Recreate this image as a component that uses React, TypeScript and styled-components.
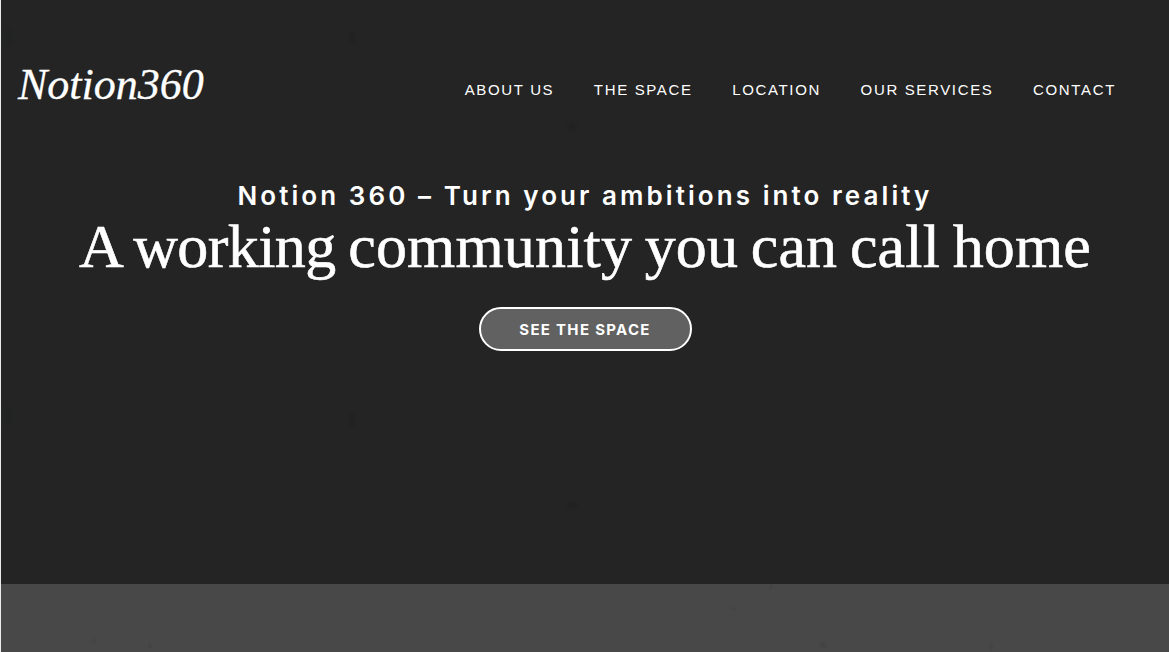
import React from 'react';
import styled, { createGlobalStyle } from 'styled-components';

const links = ['About us', 'The space', 'Location', 'Our services', 'Contact'];

const App = () => (
  <>
    <GlobalStyle />
    <Page>
      <Hero>
        <Header>
          <Logo href="#">Notion360</Logo>
          <Nav>
            {links.map((link) => (
              <NavLink key={link} href="#">
                {link}
              </NavLink>
            ))}
          </Nav>
        </Header>
        <Intro>
          <Tagline>Notion 360 – Turn your ambitions into reality</Tagline>
          <H1>
            A <Tight>working</Tight> community you can call home
          </H1>
          <Button href="#">See the space</Button>
        </Intro>
      </Hero>
      <NextSection />
    </Page>
  </>
);

const GlobalStyle = createGlobalStyle`
  * {
    box-sizing: border-box;
  }

  body {
    margin: 0;
    background: #242424;
    overflow: hidden;
  }
`;

const Page = styled.div`
  display: flex;
  flex-direction: column;
  height: 652px;
  border-left: 1px solid #e9edef;
`;

const Hero = styled.section`
  height: 584px;
  color: #fff;
  background:
    radial-gradient(ellipse 6px 14px at 8px 38px, #202121, transparent),
    radial-gradient(ellipse 5px 11px at 351px 38px, #202020, transparent),
    radial-gradient(ellipse 8px 6px at 571px 127px, #202020, transparent),
    radial-gradient(ellipse 6px 14px at 8px 416px, #202121, transparent),
    radial-gradient(ellipse 5px 11px at 351px 420px, #202020, transparent),
    radial-gradient(ellipse 8px 6px at 571px 505px, #202020, transparent),
    #242424;
`;

const Header = styled.header`
  display: flex;
  align-items: center;
  justify-content: space-between;
  height: 180px;
  padding: 0 53px 0 17px;
`;

const Logo = styled.a`
  color: inherit;
  font-family: 'Liberation Serif', serif;
  font-size: 44px;
  font-style: italic;
  line-height: 1;
  text-decoration: none;
  margin-top: -10px;
  -webkit-text-stroke: 0.3px #fff;
`;

const Nav = styled.nav`
  display: flex;
  gap: 39.6px;
`;

const NavLink = styled.a`
  color: inherit;
  font-family: 'Liberation Sans', sans-serif;
  font-size: 15px;
  letter-spacing: 1.65px;
  line-height: 20px;
  text-decoration: none;
  text-transform: uppercase;
  white-space: nowrap;
`;

const Intro = styled.div`
  display: flex;
  flex-direction: column;
  align-items: center;
  white-space: nowrap;
`;

const Tagline = styled.p`
  margin: 0;
  font-family: Inter, sans-serif;
  font-size: 26px;
  font-weight: 600;
  letter-spacing: 3.07px;
  line-height: 32px;
`;

const H1 = styled.h1`
  margin: -2px 0 0;
  font-family: 'Liberation Serif', serif;
  font-size: 62px;
  font-weight: 400;
  letter-spacing: 0.15px;
  line-height: 72px;
  word-spacing: -3px;
  -webkit-text-stroke: 0.6px #fff;
`;

const Tight = styled.span`
  letter-spacing: -0.6px;
`;

const Button = styled.a`
  display: flex;
  align-items: center;
  justify-content: center;
  width: 213px;
  height: 44px;
  margin-top: 25px;
  border: 2px solid #fff;
  border-radius: 22px;
  background: #616161;
  color: inherit;
  font-family: Inter, sans-serif;
  font-size: 15px;
  font-weight: 700;
  letter-spacing: 1.3px;
  text-decoration: none;
  text-transform: uppercase;
`;

const NextSection = styled.section`
  flex: 1;
  background:
    radial-gradient(ellipse 3px 4px at 93px 57px, #424242, transparent),
    radial-gradient(ellipse 3px 4px at 149px 62px, #424242, transparent),
    radial-gradient(ellipse 3px 4px at 770px 3px, #424242, transparent),
    radial-gradient(ellipse 3px 3px at 733px 25px, #424242, transparent),
    radial-gradient(ellipse 5px 5px at 822px 61px, #424242, transparent),
    radial-gradient(ellipse 3px 5px at 990px 63px, #424242, transparent),
    #484848;
`;

export default App;
